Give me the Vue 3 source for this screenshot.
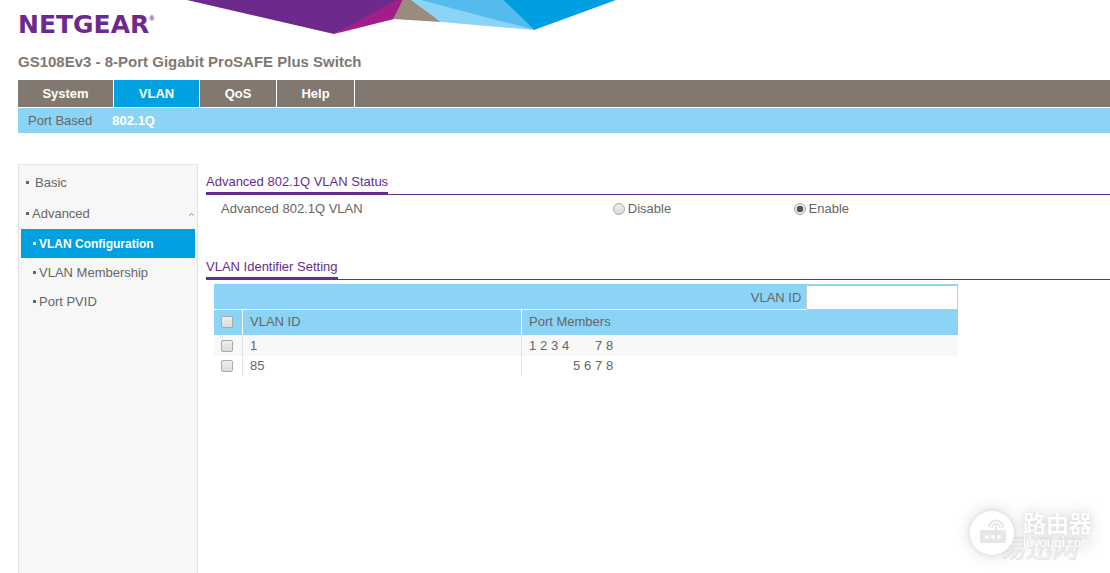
<script setup>
import { ref } from 'vue'

const tabs = ['System', 'VLAN', 'QoS', 'Help']
const activeTab = ref('VLAN')
const status = ref('enable')
const vlanId = ref('')
const selected = ref([])
const ports = [1, 2, 3, 4, 5, 6, 7, 8]
const vlans = [
  { id: 1, members: [1, 2, 3, 4, 7, 8] },
  { id: 85, members: [5, 6, 7, 8] },
]
const toggleAll = (event) => {
  selected.value = event.target.checked ? vlans.map((v) => v.id) : []
}
</script>

<template>
  <div class="page">
    <svg class="banner" width="430" height="35" viewBox="187 0 430 35" aria-hidden="true">
      <path fill="#6d2a8c" d="M187 0H403L334 34Z" />
      <path fill="#a11d8a" d="M397 0H403L394 19L334 34Z" />
      <path fill="#9a8b7d" d="M403 0H412L441 22L393 19Z" />
      <path fill="#8bd4f6" d="M411 0H424L534 30L441 22Z" />
      <path fill="#53bbed" d="M421 0H503L534 30Z" />
      <path fill="#009fe1" d="M503 0H616L534 30Z" />
    </svg>

    <header class="header">
      <div class="logo">NETGEAR<span class="reg">®</span></div>
      <h1 class="product">GS108Ev3 - 8-Port Gigabit ProSAFE Plus Switch</h1>
    </header>

    <nav class="tabs">
      <button
        v-for="tab in tabs"
        :key="tab"
        type="button"
        class="tab"
        :class="{ active: tab === activeTab }"
        @click="activeTab = tab"
      >{{ tab }}</button>
    </nav>
    <nav class="subtabs">
      <a href="#port-based">Port Based</a>
      <a href="#dot1q" class="current">802.1Q</a>
    </nav>

    <div class="body">
      <aside class="sidebar">
        <a href="#basic" class="item basic">Basic</a>
        <a href="#advanced" class="item">Advanced
          <svg class="caret" width="5" height="4" viewBox="0 0 5 4" aria-hidden="true">
            <path d="M0.5 3.5L2.5 1.5L4.5 3.5" fill="none" stroke="#777" />
          </svg>
        </a>
        <a href="#configuration" class="item sub selected">VLAN Configuration</a>
        <a href="#membership" class="item sub">VLAN Membership</a>
        <a href="#pvid" class="item sub">Port PVID</a>
      </aside>

      <main class="content">
        <section class="status">
          <div class="heading"><h2>Advanced 802.1Q VLAN Status</h2></div>
          <div class="status-row" role="radiogroup" aria-labelledby="status-label">
            <span id="status-label" class="status-label">Advanced 802.1Q VLAN</span>
            <label class="choice"><input v-model="status" type="radio" name="status" value="disable">Disable</label>
            <label class="choice"><input v-model="status" type="radio" name="status" value="enable">Enable</label>
          </div>
        </section>

        <section>
          <div class="heading"><h2>VLAN Identifier Setting</h2></div>
          <div class="panel">
            <div class="entry">
              <label for="vlan-id">VLAN ID</label>
              <input id="vlan-id" v-model="vlanId" type="text">
            </div>
            <table>
              <colgroup><col class="c-check"><col class="c-id"><col></colgroup>
              <thead>
                <tr>
                  <th><input type="checkbox" aria-label="Select all" @change="toggleAll"></th>
                  <th>VLAN ID</th>
                  <th>Port Members</th>
                </tr>
              </thead>
              <tbody>
                <tr v-for="vlan in vlans" :key="vlan.id">
                  <td><input v-model="selected" type="checkbox" :value="vlan.id" :aria-label="'VLAN ' + vlan.id"></td>
                  <td>{{ vlan.id }}</td>
                  <td>
                    <div class="ports">
                      <span v-for="port in ports" :key="port">{{ vlan.members.includes(port) ? port : '' }}</span>
                    </div>
                  </td>
                </tr>
              </tbody>
            </table>
          </div>
        </section>
      </main>
    </div>

    <div class="watermark">
      <div class="wm-back">易迅网</div>
      <div class="wm-front">
        <svg width="46" height="46" viewBox="0 0 46 46" aria-hidden="true">
          <circle cx="23" cy="23" r="22" fill="#fff" />
          <rect x="11" y="20" width="26" height="13" rx="2" fill="#e6e6e6" />
          <g fill="none" stroke="#e6e6e6" stroke-width="2">
            <path d="M20 17a7 7 0 0 1 14 1" />
            <path d="M23 18a4 4 0 0 1 8 0" />
            <path d="M27 16v5" />
          </g>
          <g fill="#fff">
            <circle cx="18" cy="27" r="2" />
            <circle cx="24" cy="27" r="2" />
            <circle cx="30" cy="27" r="2" />
          </g>
        </svg>
        <div class="wm-text">
          <div class="wm-name">路由器</div>
          <div class="wm-site">luyouqi.com</div>
        </div>
      </div>
    </div>
  </div>
</template>

<style>
body { background: #fff; }
</style>

<style scoped>
.page {
  position: relative;
  display: flex;
  flex-direction: column;
  min-height: 100vh;
  padding-left: 18px;
  box-sizing: border-box;
  overflow: hidden;
  font: 13px/20px "Liberation Sans", Arial, sans-serif;
  color: #666;
}
a { color: inherit; text-decoration: none; }
h1, h2 { margin: 0; }
.banner { position: absolute; left: 187px; top: 0; }
.header { height: 80px; }
.logo {
  display: flex;
  height: 50px;
  align-items: center;
  font: bold 25px/50px "DejaVu Sans", sans-serif;
  color: #6d2a8c;
}
.reg { font: 700 7px/22px "Liberation Sans", Arial, sans-serif; align-self: flex-start; padding-top: 8px; }
.product { font-size: 15px; line-height: 24px; color: #82786f; }

.tabs { display: grid; grid-template-columns: 96px 86px 77px 78px; height: 27px; background: #82786f; }
.tab {
  padding: 0;
  border: 0;
  border-right: 1px solid #fff;
  background: none;
  color: #fff;
  font: bold 13px/27px "Liberation Sans", Arial, sans-serif;
}
.tab.active { background: #00a0e1; }
.subtabs {
  display: flex;
  gap: 20px;
  margin-top: 1px;
  padding-left: 10px;
  background: #8bd4f5;
  line-height: 25px;
}
.current { color: #fff; font-weight: bold; }

.body { display: flex; flex: 1; gap: 8px; margin-top: 31px; }
.sidebar {
  flex: 0 0 180px;
  box-sizing: border-box;
  padding: 2px;
  border: 1px solid #e3e3e3;
  border-bottom: 0;
  background: #f7f7f7;
}
.item { display: flex; align-items: center; height: 31px; padding-left: 5px; gap: 3px; }
.item::before { content: ""; width: 3px; height: 3px; background: currentColor; }
.basic { gap: 6px; }
.caret { margin-left: auto; margin-right: 1px; }
.sub { height: 29px; padding-left: 12px; }
.selected { background: #00a0e1; color: #fff; font-size: 12px; font-weight: bold; }

.content { flex: 1; min-width: 0; padding-top: 8px; }
.heading { display: flex; border-bottom: 1px solid #662d91; }
h2 {
  margin-bottom: -1px;
  border-bottom: 3px solid #662d91;
  color: #662d91;
  font-size: 13px;
  font-weight: normal;
  line-height: 20px;
}
.status { height: 85px; }
.status-row { display: grid; grid-template-columns: 45% 20% 1fr; padding-top: 4px; }
.status-label { padding-left: 15px; }
.choice { display: flex; align-items: center; gap: 3px; }
input { margin: 0; box-sizing: border-box; }
input[type="radio"], input[type="checkbox"] {
  appearance: none;
  width: 12px;
  height: 12px;
  border: 1px solid #aaa;
  border-radius: 2px;
  background: linear-gradient(#ededed, #dcdcdc);
}
input[type="radio"] { border-radius: 50%; }
input[type="radio"]:checked { background: radial-gradient(circle, #555 0 3px, #e2e2e2 3px); }
input[type="checkbox"]:checked { background: #777; }

.panel { width: calc(83% - 6px); margin: 4px 0 0 8px; }
.entry {
  display: flex;
  justify-content: flex-end;
  height: 26px;
  padding-top: 1px;
  box-sizing: border-box;
  border-bottom: 1px solid #fff;
  background: #8bd4f5;
  line-height: 25px;
}
.entry input {
  width: 152px;
  height: 25px;
  margin-left: 5px;
  padding: 0 4px;
  border: 1px solid #c8c8c8;
  background: #fff;
  font: inherit;
}
table { width: 100%; table-layout: fixed; border-collapse: separate; border-spacing: 0; }
.c-check { width: 29px; }
.c-id { width: 279px; }
th {
  height: 25px;
  padding: 0 7px;
  border-right: 1px solid #fff;
  border-bottom: 1px solid #fff;
  background: #8bd4f5;
  text-align: left;
  font-weight: normal;
  line-height: 23px;
}
td { height: 20px; padding: 0 7px; border-right: 1px solid #e3e3e3; }
th, td { vertical-align: top; }
th:last-child, td:last-child { border-right: 0; }
tbody tr:nth-child(odd) { background: #f8f8f8; }
th input, td input { display: block; }
th input { margin-top: 6px; }
td input { margin-top: 4px; }
.ports { display: grid; grid-template-columns: repeat(8, 11px); }

.watermark { position: absolute; right: 14px; bottom: 8px; width: 127px; height: 60px; }
.wm-back {
  position: absolute;
  left: 30px;
  top: 24px;
  font: italic 26px/34px "Noto Sans CJK SC", sans-serif;
  color: #f0f0f0;
  text-shadow: 1px 1px 1px #e2e2e2;
}
.wm-front {
  position: relative;
  display: flex;
  gap: 8px;
  filter: drop-shadow(0 0 2px #e0e0e0) drop-shadow(0 0 7px #d8d8d8);
}
.wm-front > svg { flex: none; margin-top: 5px; }
.wm-text { color: #fff; padding-top: 4px; }
.wm-name { font: 500 23px/26px "Noto Sans CJK SC", sans-serif; }
.wm-site { font: 12px/16px "Noto Sans", sans-serif; }
</style>
